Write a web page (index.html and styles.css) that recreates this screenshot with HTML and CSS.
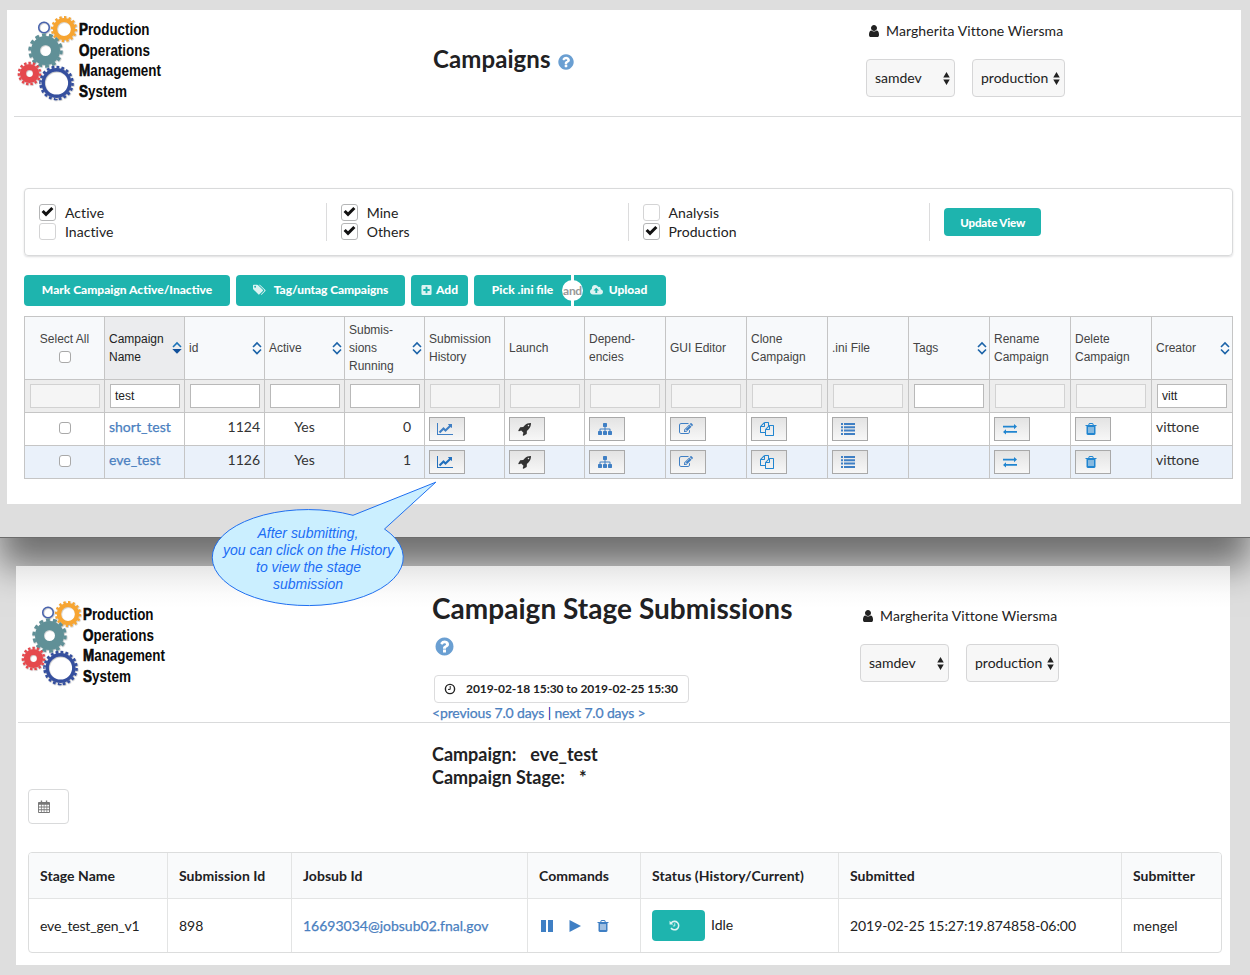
FILE: index.html
```html
<!DOCTYPE html>
<html lang="en">
<head>
<meta charset="utf-8">
<title>Campaigns</title>
<link rel="stylesheet" href="styles.css">
</head>
<body>
<svg class="defs" aria-hidden="true">
  <defs>
    <filter id="soft" x="-20%" y="-20%" width="150%" height="150%"><feDropShadow dx="0.5" dy="0.6" stdDeviation="0.7" flood-opacity="0.35"/></filter>
  </defs>
  <symbol id="user" viewBox="0 0 1792 1792"><path d="M1536 1399q0 109-62.5 187t-150.5 78h-854q-88 0-150.5-78t-62.5-187q0-85 8.5-160.5t31.5-152 58.500-131 94-89 134.500-34.500q131 128 313 128t313-128q76 0 134.500 34.500t94 89 58.500 131 31.500 152 8.500 160.500zm-256-887q0 159-112.500 271.500t-271.500 112.500-271.500-112.500-112.500-271.500 112.500-271.500 271.500-112.500 271.500 112.500 112.500 271.500z"/></symbol>
  <symbol id="help" viewBox="0 0 1792 1792"><path d="M1024 1376v-192q0-14-9-23t-23-9h-192q-14 0-23 9t-9 23v192q0 14 9 23t23 9h192q14 0 23-9t9-23zm256-672q0-88-55.5-163t-138.500-116-170-41q-243 0-371 213-15 24 8 42l132 100q7 6 19 6 16 0 25-12 53-68 86-92 34-24 86-24 48 0 85.500 26t37.500 59q0 38-20 61t-68 45q-63 28-115.500 86.500t-52.500 125.500v36q0 14 9 23t23 9h192q14 0 23-9t9-23q0-19 21.500-49.500t54.500-49.500q32-18 49-28.500t46-35 44.500-48 28-60.500 12.500-81zm384 192q0 209-103 385.500t-279.500 279.500-385.500 103-385.500-103-279.500-279.500-103-385.500 103-385.500 279.500-279.500 385.500-103 385.500 103 279.500 279.500 103 385.500z"/></symbol>
  <symbol id="chart" viewBox="0 0 2048 1792"><path d="M2048 1536v128h-2048v-1536h128v1408h1920zm-128-1248v435q0 21-19.500 29.500t-35.500-7.500l-121-121-633 633q-10 10-23 10t-23-10l-233-233-416 416-192-192 585-585q10-10 23-10t23 10l233 233 464-464-121-121q-16-16-7.500-35.500t29.500-19.500h435q14 0 23 9t9 23z"/></symbol>
  <symbol id="rocket" viewBox="0 0 1792 1792"><path d="M1440 448q0-40-28-68t-68-28-68 28-28 68 28 68 68 28 68-28 28-68zm224-288q0 249-75.500 430.500t-253.500 360.500q-81 80-195 176l-20 379q-2 16-16 26l-384 224q-7 4-16 4-12 0-23-9l-64-64q-13-14-8-32l85-276-281-281-276 85q-3 1-9 1-14 0-23-9l-64-64q-17-19-5-39l224-384q10-14 26-16l379-20q96-114 176-195 188-187 358-258t431-71q14 0 24 9.500t10 22.500z"/></symbol>
  <symbol id="sitemap" viewBox="0 0 1792 1792"><path d="M1792 1248v320q0 40-28 68t-68 28h-320q-40 0-68-28t-28-68v-320q0-40 28-68t68-28h96v-192h-512v192h96q40 0 68 28t28 68v320q0 40-28 68t-68 28h-320q-40 0-68-28t-28-68v-320q0-40 28-68t68-28h96v-192h-512v192h96q40 0 68 28t28 68v320q0 40-28 68t-68 28h-320q-40 0-68-28t-28-68v-320q0-40 28-68t68-28h96v-192q0-52 38-90t90-38h512v-192h-96q-40 0-68-28t-28-68v-320q0-40 28-68t68-28h320q40 0 68 28t28 68v320q0 40-28 68t-68 28h-96v192h512q52 0 90 38t38 90v192h96q40 0 68 28t28 68z"/></symbol>
  <symbol id="edit" viewBox="0 0 1792 1792"><path d="M888 1184l116-116-152-152-116 116v56h96v96h56zm440-720q-16-16-33 1l-350 350q-17 17-1 33t33-1l350-350q17-17 1-33zm80 594v190q0 119-84.500 203.500t-203.500 84.500h-832q-119 0-203.500-84.500t-84.500-203.500v-832q0-119 84.500-203.500t203.500-84.500h832q63 0 117 25 15 7 18 23 3 17-9 29l-49 49q-14 14-32 8-23-6-45-6h-832q-66 0-113 47t-47 113v832q0 66 47 113t113 47h832q66 0 113-47t47-113v-126q0-13 9-22l64-64q15-15 35-7t20 29zm-96-738l288 288-672 672h-288v-288zm444 132l-92 92-288-288 92-92q28-28 68-28t68 28l152 152q28 28 28 68t-28 68z"/></symbol>
  <symbol id="copy" viewBox="0 0 1792 1792"><path d="M1696 384q40 0 68 28t28 68v1216q0 40-28 68t-68 28h-960q-40 0-68-28t-28-68v-288h-544q-40 0-68-28t-28-68v-672q0-40 20-88t48-76l408-408q28-28 76-48t88-20h416q40 0 68 28t28 68v328q68-40 128-40h416zm-544 213l-299 299h299v-299zm-640-384l-299 299h299v-299zm196 647l316-316v-416h-384v416q0 40-28 68t-68 28h-416v640h512v-256q0-40 20-88t48-76zm956 804v-1152h-384v416q0 40-28 68t-68 28h-416v640h896z"/></symbol>
  <symbol id="list" viewBox="0 0 14 14"><path d="M0 1h2v2H0zM3 1h11v2H3zM0 4.300h2v2H0zM3 4.300h11v2H3zM0 7.600h2v2H0zM3 7.600h11v2H3zM0 10.900h2v2H0zM3 10.900h11v2H3z"/></symbol>
  <symbol id="swap" viewBox="0 0 14 14"><path d="M0 3.700h11V1.900L14 4.600l-3 2.700V5.500H0zM14 9H3V7.200L0 9.900l3 2.700v-1.800H14z"/></symbol>
  <symbol id="trash" viewBox="0 0 1792 1792"><path d="M704 1376v-704q0-14-9-23t-23-9h-64q-14 0-23 9t-9 23v704q0 14 9 23t23 9h64q14 0 23-9t9-23zm256 0v-704q0-14-9-23t-23-9h-64q-14 0-23 9t-9 23v704q0 14 9 23t23 9h64q14 0 23-9t9-23zm256 0v-704q0-14-9-23t-23-9h-64q-14 0-23 9t-9 23v704q0 14 9 23t23 9h64q14 0 23-9t9-23zm-544-992h448l-48-117q-7-9-17-11h-317q-10 2-17 11zm928 32v64q0 14-9 23t-23 9h-96v948q0 83-47 143.500t-113 60.500h-832q-66 0-113-58.500t-47-141.500v-952h-96q-14 0-23-9t-9-23v-64q0-14 9-23t23-9h309l70-167q15-37 54-63t79-26h320q40 0 79 26t54 63l70 167h309q14 0 23 9t9 23z"/></symbol>
  <symbol id="check" viewBox="0 0 14 14"><path d="M.6 7.600L2.900 5.300 5.400 7.800 11.100 2.100 13.400 4.400 5.400 12.400z"/></symbol>
  <symbol id="tags" viewBox="0 0 14 12"><path fill-rule="evenodd" d="M0 1.200Q0 .4.800.4h3.700q.6 0 1 .4l5 5q.6.600 0 1.200L6.900 10.700q-.6.600-1.200 0l-5.200-5.300Q0 5 0 4.500zM1.300 2.500a1 1 0 1 0 2 0a1 1 0 1 0-2 0z"/><path d="M6.200.4h.9q.5 0 .9.400l5.300 5.100q.6.600 0 1.200l-3.700 3.700q-.6.500-1.200 0l3.400-3.400q.8-.9 0-1.600z"/></symbol>
  <symbol id="plus" viewBox="0 0 12 12"><path fill-rule="evenodd" d="M2 .5h8q1.500 0 1.500 1.500v8q0 1.500-1.500 1.500H2Q.5 11.500.5 10V2Q.5.500 2 .5zM5 2.500V5H2.500v2H5v2.500h2V7h2.500V5H7V2.500z"/></symbol>
  <symbol id="cloud" viewBox="0 0 14 12"><path fill-rule="evenodd" d="M3.300 10.800Q0 10.700 0 7.700 0 5.700 2 4.900 1.900.8 5.500.6q2.400 0 3.400 2.100 2.600-.5 2.700 2.400Q14 5.700 14 8q0 2.700-2.900 2.800zM6.700 3.600L3.800 6.600h2v2.700h2V6.600h2z"/></symbol>
  <symbol id="clock" viewBox="0 0 12 12"><circle cx="6" cy="6" r="4.600" fill="none" stroke="currentColor" stroke-width="1.400"/><path d="M6.200 3v3.400H4" fill="none" stroke="currentColor" stroke-width="1"/></symbol>
  <symbol id="calendar" viewBox="0 0 13 14"><path fill-rule="evenodd" d="M1 2h2V.5h1.500V2h4V.5H10V2h2q1 0 1 1v10q0 1-1 1H1q-1 0-1-1V3q0-1 1-1zM1 5v2h2.200V5zM4 5v2h2.200V5zM7 5v2h2.200V5zM10 5v2h2V5zM1 8v2h2.200V8zM4 8v2h2.200V8zM7 8v2h2.200V8zM10 8v2h2V8zM1 11v2h2.200v-2zM4 11v2h2.200v-2zM7 11v2h2.200v-2zM10 11v2h2v-2z"/></symbol>
  <symbol id="history" viewBox="0 0 12 12"><path d="M2.400 3.200A4.600 4.600 0 1 1 2.200 8.700" fill="none" stroke="currentColor" stroke-width="1.700"/><path d="M.6.900V5h4.200z"/><path d="M6.300 3.600v2.900H4.200" fill="none" stroke="currentColor"/></symbol>
  <symbol id="sort" viewBox="0 0 10 14"><path d="M1 6L5 2l4 4M1 8.500l4 4 4-4" fill="none" stroke="#1b63a8" stroke-width="1.600"/></symbol>
  <symbol id="sort-down" viewBox="0 0 10 14"><path d="M1 6L5 2l4 4" fill="none" stroke="#1b73b8" stroke-width="1.600"/><path d="M.3 8h9.400L5 12.800z" fill="#11509a"/></symbol>
  <symbol id="updown" viewBox="0 0 6 12"><path d="M0 5L3 0l3 5zM0 7l3 5 3-5z"/></symbol>
  <symbol id="logo" viewBox="0 0 150 90">
    <g fill="none" filter="url(#soft)">
      <circle cx="28" cy="13.500" r="5.300" stroke="#4863ad" stroke-width="1.500"/>
      <circle cx="48" cy="15" r="9" stroke="#f7a531" stroke-width="4.200"/>
      <circle cx="48" cy="15" r="11.800" stroke="#f7a531" stroke-width="2.600" pathLength="32" stroke-dasharray="1 1"/>
      <circle cx="29.500" cy="36.500" r="10" stroke="#609097" stroke-width="9"/>
      <circle cx="29.500" cy="36.500" r="15.700" stroke="#609097" stroke-width="3" pathLength="28" stroke-dasharray="1.100 .9"/>
      <circle cx="13.500" cy="59.500" r="6.500" stroke="#e5484d" stroke-width="6.200"/>
      <circle cx="13.500" cy="59.500" r="10.600" stroke="#e5484d" stroke-width="2.500" pathLength="30" stroke-dasharray="1.100 .9"/>
      <circle cx="40.500" cy="69" r="13.300" stroke="#354f9e" stroke-width="3.400"/>
      <circle cx="40.500" cy="69" r="16" stroke="#354f9e" stroke-width="2.600" pathLength="40" stroke-dasharray="1.100 .9"/>
    </g>
    <g class="logo-text">
      <text x="63" y="21" textLength="70.500" lengthAdjust="spacingAndGlyphs"><tspan class="cap">P</tspan>roduction</text>
      <text x="63" y="41.500" textLength="71" lengthAdjust="spacingAndGlyphs"><tspan class="cap">O</tspan>perations</text>
      <text x="63" y="62" textLength="82" lengthAdjust="spacingAndGlyphs"><tspan class="cap">M</tspan>anagement</text>
      <text x="63" y="82.500" textLength="48" lengthAdjust="spacingAndGlyphs"><tspan class="cap">S</tspan>ystem</text>
    </g>
  </symbol>
</svg>

<section class="window top-window">
  <div class="panel panel-campaigns">
    <header class="head">
      <svg class="logo"><use href="#logo"/></svg>
      <h1 class="title">Campaigns <svg class="help"><use href="#help"/></svg></h1>
      <div class="account">
        <div class="user"><svg class="ic14"><use href="#user"/></svg>Margherita Vittone Wiersma</div>
        <div class="selects">
          <div class="select s1">samdev<svg class="updown"><use href="#updown"/></svg></div>
          <div class="select s2">production<svg class="updown"><use href="#updown"/></svg></div>
        </div>
      </div>
    </header>

    <div class="filters">
      <div class="fcol">
        <label class="opt"><span class="box on"><svg><use href="#check"/></svg></span>Active</label>
        <label class="opt"><span class="box"></span>Inactive</label>
      </div>
      <div class="fcol">
        <label class="opt"><span class="box on"><svg><use href="#check"/></svg></span>Mine</label>
        <label class="opt"><span class="box on"><svg><use href="#check"/></svg></span>Others</label>
      </div>
      <div class="fcol">
        <label class="opt"><span class="box"></span>Analysis</label>
        <label class="opt"><span class="box on"><svg><use href="#check"/></svg></span>Production</label>
      </div>
      <div class="fcol update"><button class="btn small">Update View</button></div>
    </div>

    <div class="actions">
      <button class="btn mark">Mark Campaign Active/Inactive</button>
      <button class="btn tag"><svg class="bi"><use href="#tags"/></svg>Tag/untag Campaigns</button>
      <button class="btn add"><svg class="bi"><use href="#plus"/></svg>Add</button>
      <div class="pair">
        <button class="btn pick">Pick .ini file</button>
        <button class="btn upload"><svg class="bi"><use href="#cloud"/></svg>Upload</button>
        <span class="and">and</span>
      </div>
    </div>

    <table class="grid">
      <colgroup><col class="n"><col class="n"><col class="n"><col class="n"><col class="n"><col class="n"><col class="n"><col span="8" class="w"></colgroup>
      <tr class="heads">
        <th class="center">Select All<span class="cb"></span></th>
        <th class="sorted"><div class="h">Campaign<br>Name<svg><use href="#sort-down"/></svg></div></th>
        <th><div class="h">id<svg><use href="#sort"/></svg></div></th>
        <th><div class="h">Active<svg><use href="#sort"/></svg></div></th>
        <th><div class="h">Submis-<br>sions<br>Running<svg><use href="#sort"/></svg></div></th>
        <th>Submission<br>History</th>
        <th>Launch</th>
        <th>Depend-<br>encies</th>
        <th>GUI Editor</th>
        <th>Clone<br>Campaign</th>
        <th>.ini File</th>
        <th><div class="h">Tags<svg><use href="#sort"/></svg></div></th>
        <th>Rename<br>Campaign</th>
        <th>Delete<br>Campaign</th>
        <th><div class="h">Creator<svg><use href="#sort"/></svg></div></th>
      </tr>
      <tr class="search">
        <td><div class="in off"></div></td><td><div class="in">test</div></td><td><div class="in"></div></td><td><div class="in"></div></td><td><div class="in"></div></td>
        <td><div class="in off"></div></td><td><div class="in off"></div></td><td><div class="in off"></div></td><td><div class="in off"></div></td><td><div class="in off"></div></td>
        <td><div class="in off"></div></td><td><div class="in"></div></td><td><div class="in off"></div></td><td><div class="in off"></div></td><td><div class="in">vitt</div></td>
      </tr>
      <tr class="row">
        <td class="sel"><span class="cb"></span></td><td class="link">short_test</td><td class="num">1124</td><td class="mid">Yes</td><td class="num runs">0</td>
        <td class="act"><div class="ib"><svg class="wide"><use href="#chart"/></svg></div></td>
        <td class="act"><div class="ib dark"><svg><use href="#rocket"/></svg></div></td>
        <td class="act"><div class="ib"><svg><use href="#sitemap"/></svg></div></td>
        <td class="act"><div class="ib"><svg><use href="#edit"/></svg></div></td>
        <td class="act"><div class="ib bright"><svg><use href="#copy"/></svg></div></td>
        <td class="act"><div class="ib"><svg><use href="#list"/></svg></div></td>
        <td></td>
        <td class="act"><div class="ib bright"><svg><use href="#swap"/></svg></div></td>
        <td class="act"><div class="ib bright"><svg><use href="#trash"/></svg></div></td>
        <td>vittone</td>
      </tr>
      <tr class="row alt">
        <td class="sel"><span class="cb"></span></td><td class="link">eve_test</td><td class="num">1126</td><td class="mid">Yes</td><td class="num runs">1</td>
        <td class="act"><div class="ib deep"><svg class="wide"><use href="#chart"/></svg></div></td>
        <td class="act"><div class="ib dark"><svg><use href="#rocket"/></svg></div></td>
        <td class="act"><div class="ib"><svg><use href="#sitemap"/></svg></div></td>
        <td class="act"><div class="ib"><svg><use href="#edit"/></svg></div></td>
        <td class="act"><div class="ib bright"><svg><use href="#copy"/></svg></div></td>
        <td class="act"><div class="ib"><svg><use href="#list"/></svg></div></td>
        <td></td>
        <td class="act"><div class="ib bright"><svg><use href="#swap"/></svg></div></td>
        <td class="act"><div class="ib bright"><svg><use href="#trash"/></svg></div></td>
        <td>vittone</td>
      </tr>
    </table>
  </div>
</section>

<section class="window">
  <div class="panel panel-stages">
    <header class="head head2">
      <svg class="logo"><use href="#logo"/></svg>
      <div class="stage-title">
        <h1 class="title big">Campaign Stage Submissions</h1>
        <svg class="help"><use href="#help"/></svg>
        <div class="range"><svg><use href="#clock"/></svg><span>2019-02-18 15:30 to 2019-02-25 15:30</span></div>
        <div class="pager"><a>&lt;previous 7.0 days</a> <b>|</b> <a>next 7.0 days &gt;</a></div>
      </div>
      <div class="account">
        <div class="user"><svg class="ic14"><use href="#user"/></svg>Margherita Vittone Wiersma</div>
        <div class="selects">
          <div class="select s1">samdev<svg class="updown"><use href="#updown"/></svg></div>
          <div class="select s2">production<svg class="updown"><use href="#updown"/></svg></div>
        </div>
      </div>
    </header>
    <div class="summary">
      <div>Campaign:<span class="v1">eve_test</span></div>
      <div>Campaign Stage:<span class="v1">*</span></div>
    </div>
    <div class="cal"><svg><use href="#calendar"/></svg></div>
    <table class="stages">
      <colgroup><col class="c1"><col class="c2"><col class="c3"><col class="c4"><col class="c5"><col class="c6"><col class="c7"></colgroup>
      <tr><th>Stage Name</th><th>Submission Id</th><th>Jobsub Id</th><th>Commands</th><th class="wider">Status (History/Current)</th><th>Submitted</th><th>Submitter</th></tr>
      <tr>
        <td class="tight">eve_test_gen_v1</td><td>898</td><td class="link">16693034@jobsub02.fnal.gov</td>
        <td><div class="cmds">
          <svg viewBox="0 0 12 12"><path d="M0 0h5v12H0zM7 0h5v12H7z"/></svg>
          <svg viewBox="0 0 12 12"><path d="M.5 0L12 6 .5 12z"/></svg>
          <svg class="bin"><use href="#trash"/></svg></div></td>
        <td><div class="status"><button class="btn hist"><svg><use href="#history"/></svg></button><span class="idle">Idle</span></div></td>
        <td class="stamp">2019-02-25 15:27:19.874858-06:00</td><td>mengel</td>
      </tr>
    </table>
  </div>
</section>

<svg class="callout" viewBox="210 480 230 130">
  <path d="M353 515.300L435.800 482.200 384.500 529A95.500 48 0 1 1 353 515.300z" fill="#cbefff" stroke="#1f6ff0" stroke-width="1"/>
  <g class="callout-text">
    <text x="308" y="538" textLength="101">After submitting,</text>
    <text x="308.500" y="555" textLength="171">you can click on the History</text>
    <text x="308.500" y="572" textLength="105">to view the stage</text>
    <text x="308" y="589" textLength="70">submission</text>
  </g>
</svg>
</body>
</html>
```
FILE: styles.css
```css
* { box-sizing: border-box; }
body { margin: 0; width: 1250px; height: 975px; position: relative; overflow: hidden; background: #dedede; color: #222; font: 14px/20px Lato, sans-serif; }
svg { fill: currentColor; display: block; flex: none; }
.defs { position: absolute; width: 0; height: 0; }
.top-window { position: relative; height: 538px; padding: 10px 9px 0 7px; background: #dedede; border-bottom: 1px solid #6c6c6c; box-shadow: 0 28px 34px rgba(0,0,0,.5); }
.panel { background: #fff; }
.panel-campaigns { height: 494px; }
.panel-stages { position: relative; height: 399px; margin: 28px 20px 0 16px; background: linear-gradient(#e6e6e6 0, #f2f2f2 14px, #fbfbfb 28px, #fff 42px); padding-top: 1px; }

.head { display: grid; grid-template-columns: 419px 433px 1fr; height: 107px; margin-left: 7px; border-bottom: 1px solid #d9dadb; }
.logo { width: 150px; height: 90px; margin: 4px 0 0 2px; overflow: visible; }
#logo { overflow: visible; }
.logo-text { font: bold 16px "Liberation Sans", sans-serif; fill: #0a0a0a; }
.cap { stroke: #0a0a0a; stroke-width: .7px; }
.title { display: flex; align-items: center; margin: 34px 0 0; height: 30px; font-size: 24px; line-height: 30px; font-weight: 700; letter-spacing: .09px; color: #212123; white-space: nowrap; }
.title .help { margin: 5px 0 0 6px; }
.help { width: 18px; height: 18px; color: #6a9fd2; }
.user { display: flex; align-items: center; gap: 5px; height: 20px; margin-top: 11px; padding-left: 1px; letter-spacing: .09px; white-space: nowrap; }
.ic14 { width: 14px; height: 14px; }
.selects { display: flex; gap: 17px; margin-top: 18px; }
.select { display: flex; align-items: center; justify-content: space-between; height: 38px; padding: 0 4px 0 8px; border: 1px solid #d6d6d7; border-radius: 4px; background: #f7f7f7; }
.s1 { width: 89px; }
.s2 { width: 93px; }
.updown { width: 7px; height: 13px; }

.filters { display: grid; grid-template-columns: repeat(4, 1fr); margin: 71px 8px 0 17px; height: 68px; padding: 14px 0; border: 1px solid #d9dadb; border-radius: 4px; box-shadow: 0 1px 2px rgba(34,36,38,.15); }
.fcol { height: 38px; padding: 0 0 0 14px; border-right: 1px solid #dcdcdd; }
.fcol.update { border: 0; padding-top: 5px; }
.opt { display: flex; align-items: center; height: 19px; letter-spacing: .06px; }
.box { width: 17px; height: 17px; margin-right: 9px; border: 1px solid #d4d4d5; border-radius: 3px; background: #fff; }
.box.on { border-color: #b5b6b7; }
.box svg { width: 13px; height: 13px; margin: 0 1px; color: #111; }

.btn { display: flex; align-items: center; justify-content: center; height: 31px; padding: 0 0 2px; border: 0; border-radius: 4px; background: #1eb4ae; color: #fff; font: 900 12px/20px Lato, sans-serif; white-space: nowrap; }
.btn.small { width: 97px; height: 28px; padding: 2px 0 0; font-size: 11.5px; letter-spacing: -.15px; }
.bi { width: 13px; height: 12px; opacity: .85; }
.actions { display: flex; gap: 6px; margin: 19px 0 0 17px; }
.mark { width: 206px; }
.tag { width: 169px; letter-spacing: -.08px; }
.tag .bi { margin-right: 8px; }
.add { width: 57px; }
.add .bi { width: 11px; margin-right: 4px; }
.pair { position: relative; display: flex; gap: 3px; }
.pick { width: 97px; border-radius: 4px 0 0 4px; }
.upload { width: 92px; padding-right: 3px; border-radius: 0 4px 4px 0; }
.upload .bi { margin-right: 6px; }
.and { position: absolute; left: 88px; top: 5px; width: 21px; height: 21px; border-radius: 50%; background: #fff; color: #999; font-size: 12px; font-weight: 700; line-height: 21px; letter-spacing: -.3px; text-align: center; }

.grid { table-layout: fixed; width: 1209px; margin: 10px 0 0 17px; border-collapse: separate; border-spacing: 0; border-top: 1px solid #c5c5c5; border-left: 1px solid #c5c5c5; }
.grid .n { width: 80px; }
.grid .w { width: 81px; }
.grid th, .grid td { padding: 0 4px; border-right: 1px solid #c5c5c5; border-bottom: 1px solid #c5c5c5; }
.grid th { height: 63px; background: #f7f9fb; font: 12px/18px "Liberation Sans", Arial, sans-serif; color: #444; text-align: left; white-space: nowrap; }
.grid th.center { text-align: center; }
.grid th.sorted { background: #ebecee; color: #222; }
.h { position: relative; }
.h svg { position: absolute; right: -1.500px; top: 50%; width: 10px; height: 14px; margin-top: -7px; }
.cb { display: block; width: 12px; height: 12px; margin: 0 auto; border: 1px solid #a9a9a9; border-radius: 3px; background: #fff; }
th .cb { margin: 3px auto; }
.search td { height: 33px; background: #ededed; }
.in { height: 24px; margin: 0 0 0 1px; width: 70px; padding: 0 4px; border: 1px solid #b9b9b9; background: #fff; font: 12px/22px "Liberation Sans", Arial, sans-serif; color: #222; }
.in.off { border-color: #d2d2d2; background: #f5f5f5; }
.row td { height: 33px; line-height: 20px; padding-bottom: 4px; color: #333; }
.row td.sel { padding-bottom: 2px; }
.row td.act { padding-bottom: 3px; }
.alt td { background: #eaf1fa; }
td.link, .pager a { color: #4a80c0 !important; -webkit-text-stroke: .25px #4a80c0; }
.num { text-align: right; }
.runs { padding-right: 13px !important; }
.mid { text-align: center; }
.ib { display: flex; align-items: center; width: 36px; height: 24px; margin-top: 3px; padding-left: 8px; border: 1px solid #a9a9a9; background: linear-gradient(#e3e3e3, #f7f7f7); color: #3f7fc4; }
.ib svg { width: 14px; height: 14px; }
.ib .wide { width: 16px; margin-left: -1px; }
.ib.dark { color: #333; }
.ib.bright { color: #2185d0; }
.ib.deep { color: #2270bd; }

.head2 { height: 156px; margin-left: 2px; grid-template-columns: 414px 428px 1fr; }
.head2 .logo { margin: 32px 0 0 2px; }
.head2 .account { padding-top: 28px; }
.stage-title { display: flex; flex-direction: column; }
.title.big { margin-top: 24px; height: 34px; font-size: 28px; line-height: 34px; letter-spacing: .03px; }
.stage-title .help { width: 21px; height: 21px; margin: 11px 0 0 2px; }
.range { display: flex; align-items: center; width: 255px; height: 28px; margin: 18px 0 0 2px; padding-left: 9px; border: 1px solid #dcdcdd; border-radius: 4px; background: #fff; font-size: 12px; font-weight: 700; letter-spacing: -.06px; white-space: nowrap; }
.range svg { width: 12px; height: 12px; margin-right: 10px; }
.pager { line-height: 20px; height: 20px; letter-spacing: -.15px; white-space: nowrap; }
.pager b { color: #1a1aa6; font-weight: 400; }
.summary { margin: 20px 0 0 416px; height: 46px; font-size: 18px; line-height: 23px; font-weight: 700; color: #212123; }
.v1 { margin-left: 14px; }
.cal { display: flex; align-items: center; width: 41px; height: 35px; margin: 0 0 0 12px; padding-left: 9px; border: 1px solid #d9dadb; border-radius: 4px; color: #777; }
.cal svg { width: 12px; height: 13px; }
.stages { table-layout: fixed; width: 1194px; margin: 28px 0 0 12px; border-collapse: separate; border-spacing: 0; border: 1px solid #dcdddd; border-radius: 4px; overflow: hidden; }
.stages th, .stages td { padding: 0 11px; border-right: 1px solid #e3e4e4; text-align: left; white-space: nowrap; }
.stages th:last-child, .stages td:last-child { border-right: 0; }
.stages th { height: 46px; border-bottom: 1px solid #e3e4e4; background: #f9fafb; font-weight: 700; color: #212123; letter-spacing: .04px; }
.stages th.wider { letter-spacing: .09px; }
.stages td { height: 53px; }
.stages td.tight { letter-spacing: -.17px; }
.stages td.stamp { letter-spacing: -.06px; }
.c1 { width: 139px; } .c2 { width: 124px; } .c3 { width: 236px; } .c4 { width: 113px; } .c5 { width: 198px; } .c6 { width: 283px; } .c7 { width: 99px; }
.cmds { display: flex; align-items: center; gap: 16px; padding-left: 2px; color: #3f7fc4; }
.cmds svg { width: 12px; height: 12px; }
.cmds .bin { width: 14px; height: 14px; margin-left: -1px; }
.status { display: flex; align-items: center; gap: 6px; }
.idle { padding-bottom: 2px; }
.hist { width: 53px; padding: 0 8px 0 0; }
.hist svg { width: 11px; height: 11px; opacity: .85; }

.callout { position: absolute; left: 210px; top: 480px; width: 230px; height: 130px; }
.callout-text { font: italic 14px "Liberation Sans", Arial, sans-serif; fill: #1b6df5; text-anchor: middle; }
```
